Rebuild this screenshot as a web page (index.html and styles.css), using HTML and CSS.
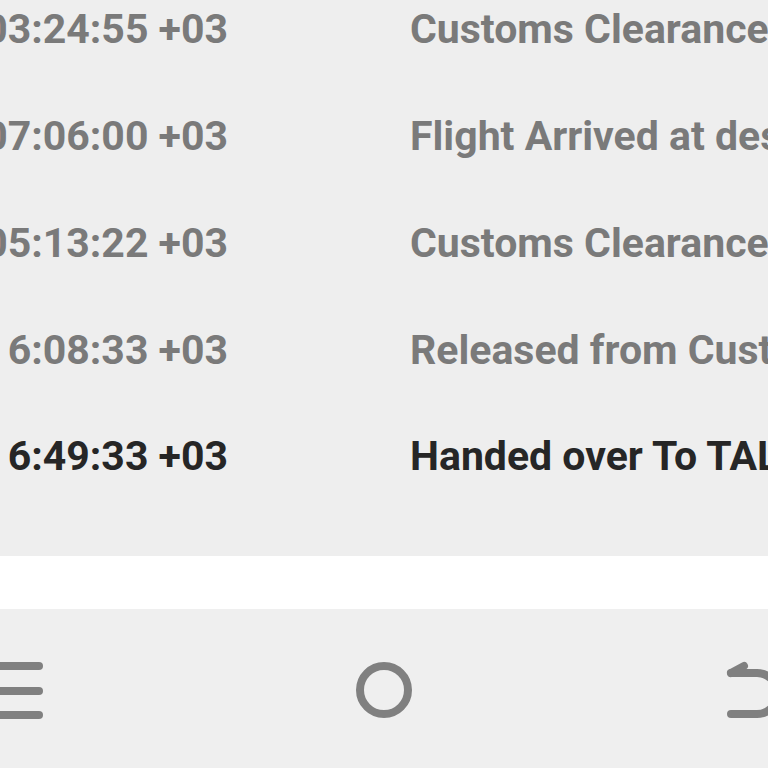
FILE: index.html
```html
<!DOCTYPE html>
<html lang="en">
<head>
<meta charset="utf-8">
<title>Tracking history</title>
<link rel="stylesheet" href="styles.css">
</head>
<body>
<div class="screen">
  <section class="history">
    <ul class="events">
      <li class="event">
        <span class="time"><span class="time-text">2023-05-10 03:24:55 +03</span></span>
        <span class="desc">Customs Clearance</span>
      </li>
      <li class="event">
        <span class="time"><span class="time-text">2023-05-10 07:06:00 +03</span></span>
        <span class="desc">Flight Arrived at destination</span>
      </li>
      <li class="event">
        <span class="time"><span class="time-text">2023-05-11 05:13:22 +03</span></span>
        <span class="desc">Customs Clearance</span>
      </li>
      <li class="event">
        <span class="time"><span class="time-text">2023-05-11 6:08:33 +03</span></span>
        <span class="desc">Released from Customs</span>
      </li>
      <li class="event current">
        <span class="time"><span class="time-text">2023-05-11 6:49:33 +03</span></span>
        <span class="desc">Handed over To TALABAT</span>
      </li>
    </ul>
  </section>
  <div class="spacer"></div>
  <nav class="navbar">
    <svg class="nav-icon menu" width="44" height="64" viewBox="0 0 44 64" aria-label="Recent apps">
      <g stroke="#808080" stroke-width="8" stroke-linecap="round">
        <line x1="-10" y1="8" x2="39" y2="8"/>
        <line x1="-10" y1="33" x2="39" y2="33"/>
        <line x1="-10" y1="57" x2="39" y2="57"/>
      </g>
    </svg>
    <svg class="nav-icon home" width="60" height="64" viewBox="0 0 60 64" aria-label="Home">
      <circle cx="30" cy="32" r="24" fill="none" stroke="#808080" stroke-width="8"/>
    </svg>
    <svg class="nav-icon back" width="45" height="64" viewBox="0 0 45 64" aria-label="Back">
      <g fill="none" stroke="#808080" stroke-width="8" stroke-linecap="round" stroke-linejoin="round">
        <path d="M8 15 H34 A20.5 20.5 0 0 1 34 56 H8"/>
        <path d="M8 15 L21 8"/>
      </g>
    </svg>
  </nav>
</div>
</body>
</html>
```

FILE: styles.css
```css
* {
  box-sizing: border-box;
}

html, body {
  margin: 0;
  padding: 0;
  background: #eeeeee;
}

body {
  width: 768px;
  height: 768px;
  overflow: hidden;
  font-family: Roboto, "Liberation Sans", sans-serif;
}

.screen {
  display: flex;
  flex-direction: column;
  height: 768px;
}

.history {
  height: 556px;
  overflow: hidden;
  background: #eeeeee;
}

.events {
  list-style: none;
  margin: -24px 0 0 0;
  padding: 0;
}

.event {
  display: flex;
  align-items: center;
  height: 106.75px;
  font-size: 41px;
  font-weight: 700;
  color: #7a7a7a;
  white-space: nowrap;
}

.event.current {
  color: #262626;
}

.time {
  flex: 0 0 228px;
  width: 228px;
  min-width: 0;
  display: flex;
  justify-content: flex-end;
}

.time-text {
  flex: none;
  white-space: nowrap;
}

.desc {
  margin-left: 182px;
  white-space: nowrap;
}

.spacer {
  height: 53px;
  background: #ffffff;
}

.navbar {
  flex: 1;
  display: flex;
  justify-content: space-between;
  align-items: flex-start;
  padding-top: 49px;
  background: #efefef;
}

.nav-icon {
  display: block;
}
```
